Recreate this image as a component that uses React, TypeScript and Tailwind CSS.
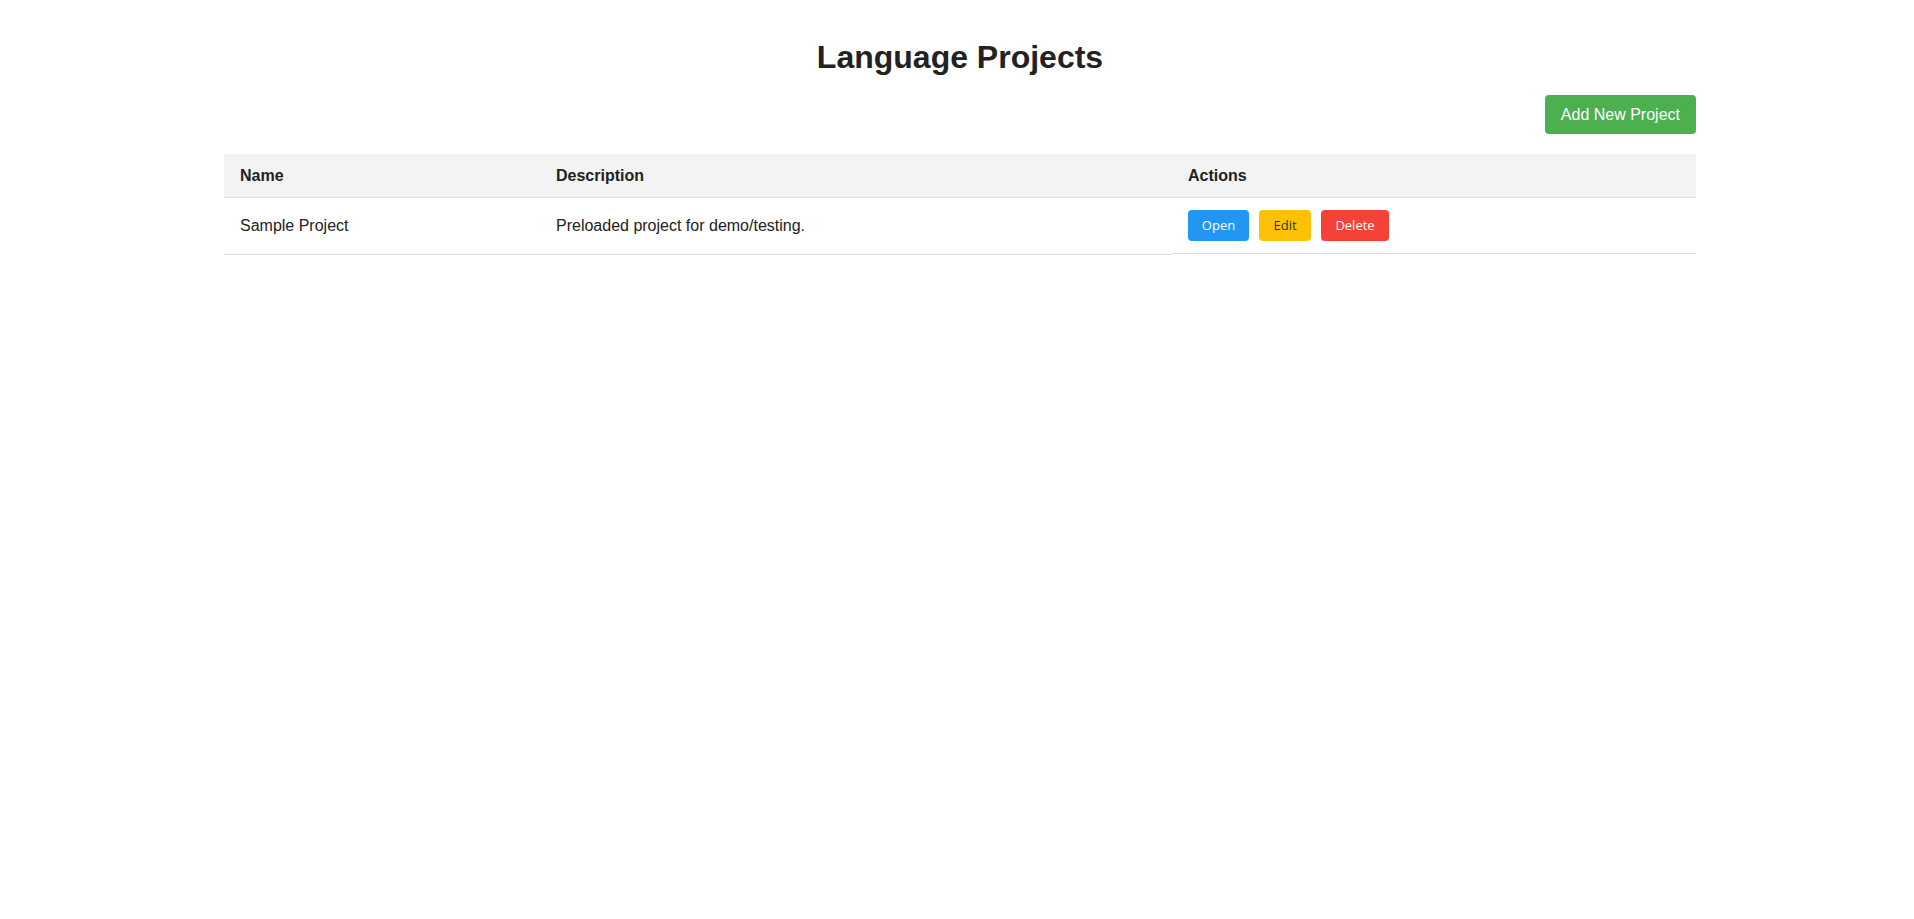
import React from 'react';

type Project = { id: string; name: string; description: string };

const projects: Project[] = [
    { id: 'sample', name: 'Sample Project', description: 'Preloaded project for demo/testing.' },
];

export default function App() {
    return (
        <div className="min-h-screen bg-white text-[#222] font-['Liberation_Sans',Arial,sans-serif]">
            <div className="ml-[224px] w-[1472px] pt-[39px]">
                <h1 className="text-center text-[32px] leading-[37px] font-bold">Language Projects</h1>

                <div className="mt-[19px] flex justify-end">
                    <button className="h-[39px] px-4 rounded bg-[#4CAF50] text-white text-base leading-[18px]">
                        Add New Project
                    </button>
                </div>

                {/* Project table */}
                <div className="mt-5">
                    <div className="flex h-[44px] items-center bg-[#f3f3f3] border-b border-[#dedede] font-bold text-base">
                        <div className="w-[316px] px-4">Name</div>
                        <div className="w-[632px] px-4">Description</div>
                        <div className="flex-1 px-4">Actions</div>
                    </div>
                    {projects.map(p => (
                        <div key={p.id} className="flex items-start text-base">
                            <div className="w-[316px] h-[57px] px-4 flex items-center border-b border-[#dedede]">{p.name}</div>
                            <div className="w-[632px] h-[57px] px-4 flex items-center border-b border-[#dedede]">{p.description}</div>
                            <div className="flex-1 h-[56px] px-4 flex items-center gap-[10px] border-b border-[#dedede] font-['Open_Sans',sans-serif] text-[13px]">
                                <button className="w-[61px] h-[31px] rounded bg-[#2196F3] text-white">Open</button>
                                <button className="w-[52px] h-[31px] rounded bg-[#FFC107] text-[#333]">Edit</button>
                                <button className="w-[68px] h-[31px] rounded bg-[#F44336] text-white">Delete</button>
                            </div>
                        </div>
                    ))}
                </div>
            </div>
        </div>
    );
}
